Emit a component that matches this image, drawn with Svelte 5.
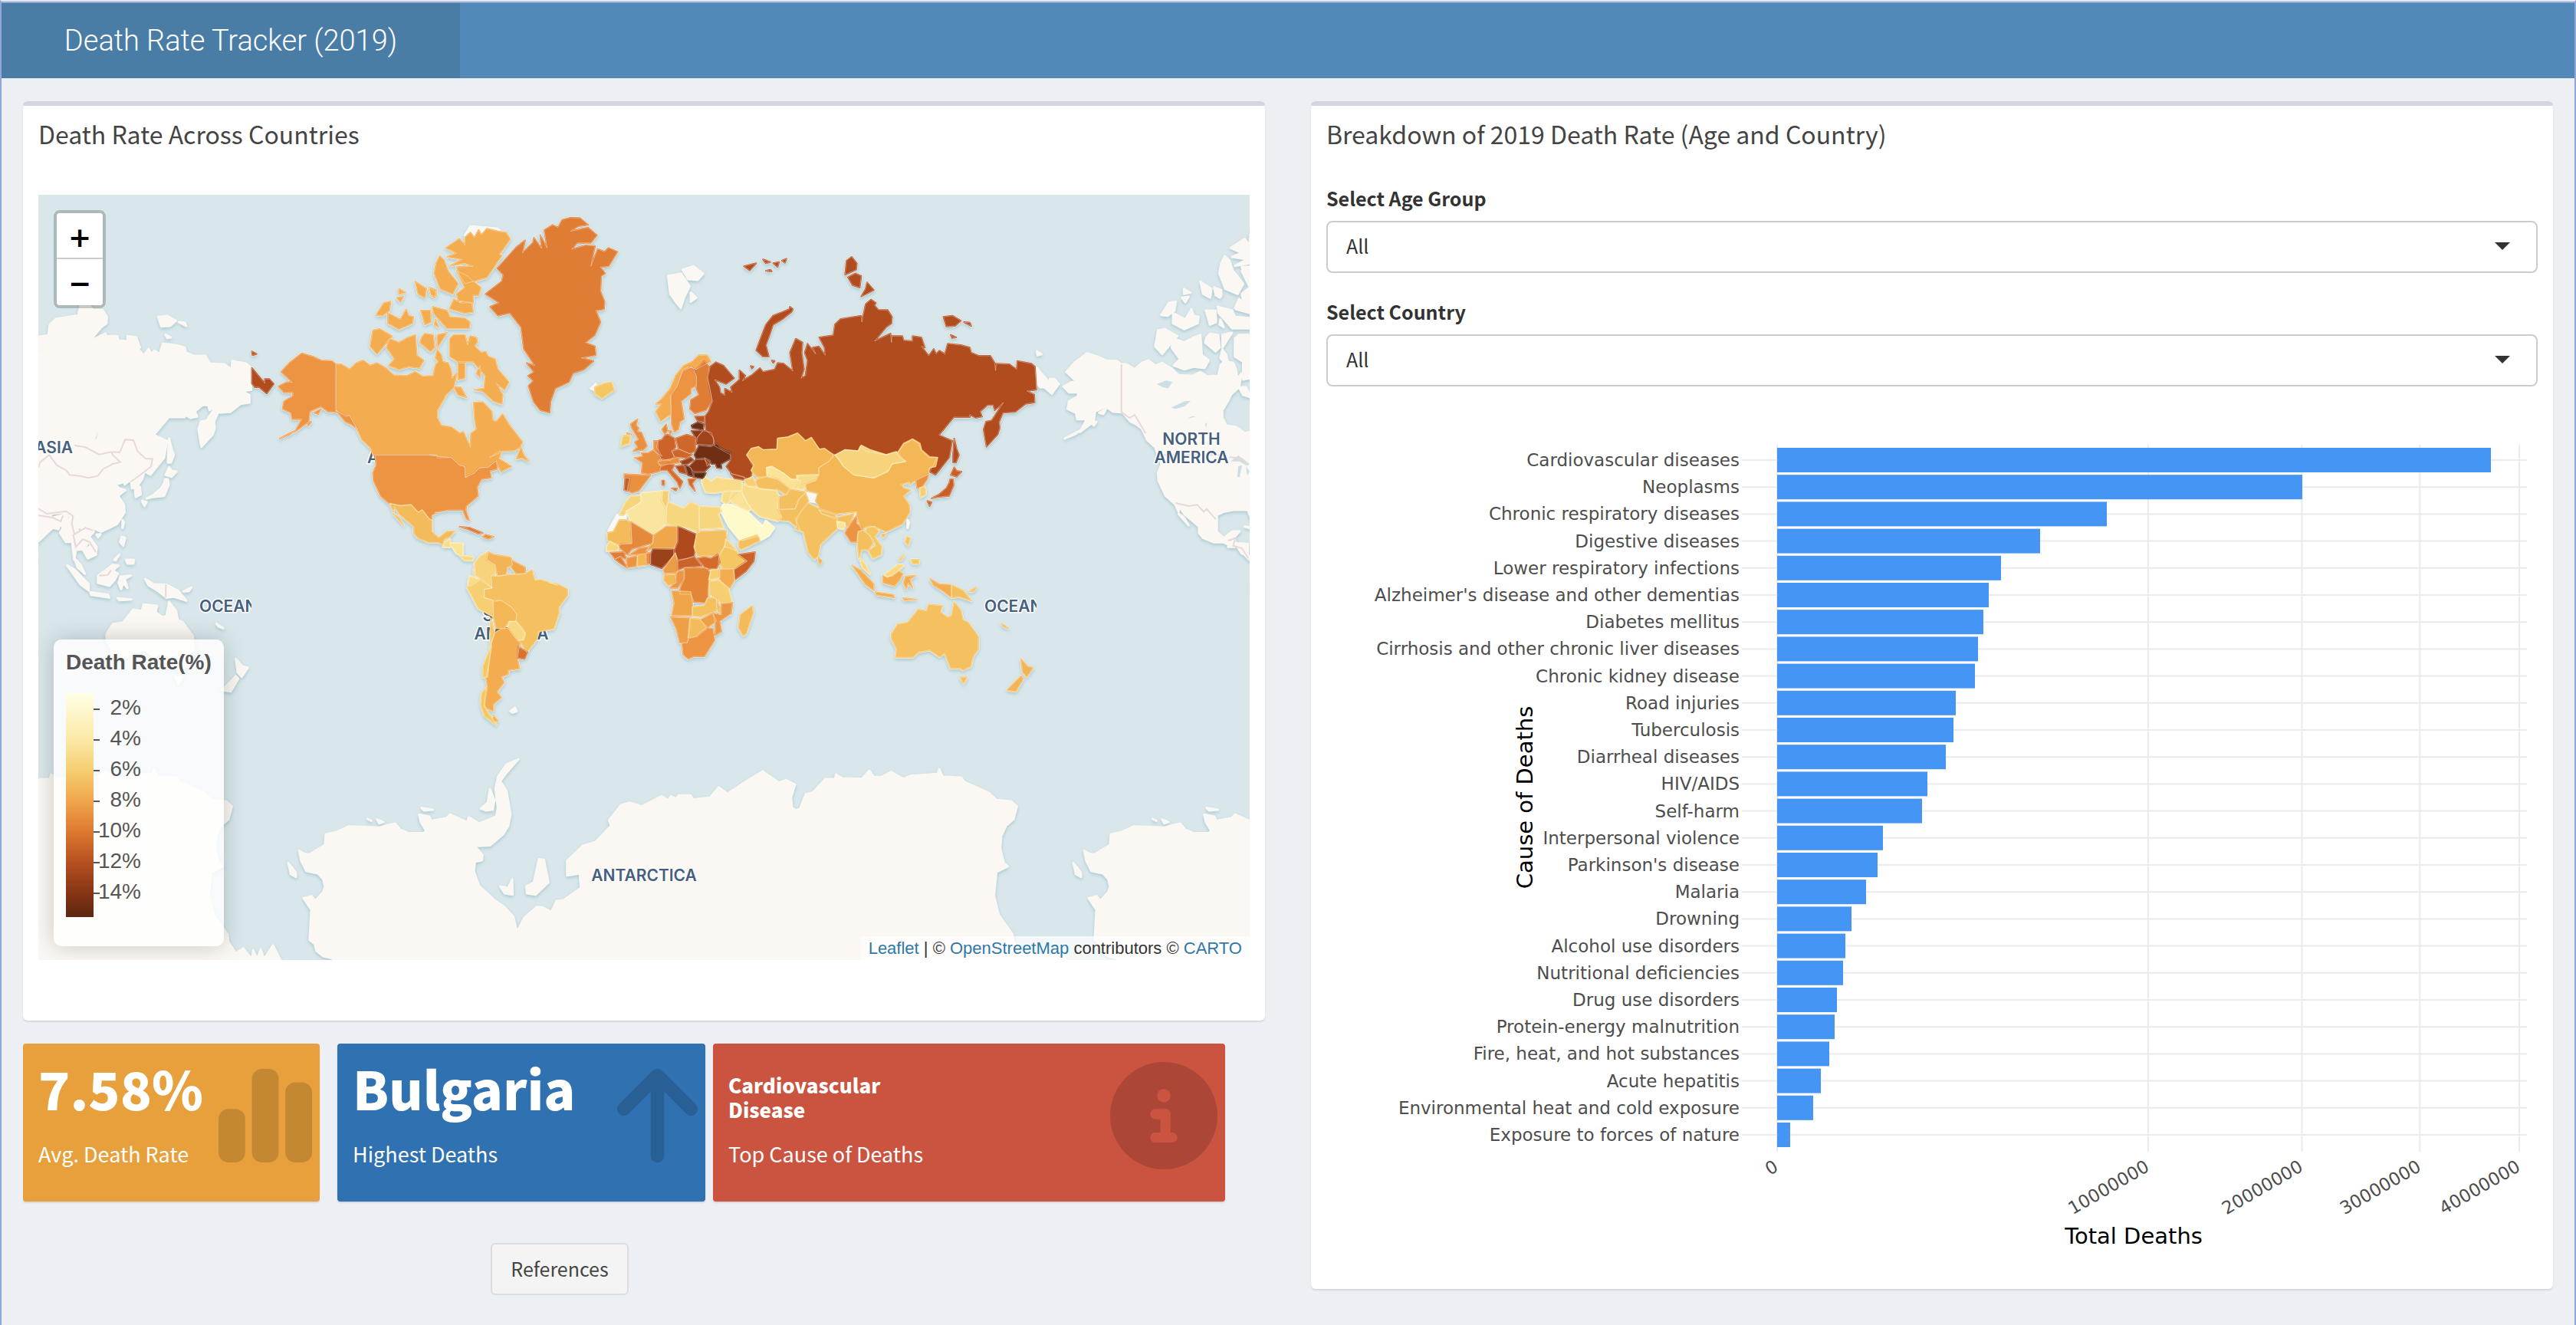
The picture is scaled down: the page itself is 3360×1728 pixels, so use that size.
<script>
  let age = $state('All');
  let country = $state('All');

  // Outlines are kept on separate sheets; each sheet has its origin on the map and its own scale.
  const sheets = {
    A: [40, 240, 2.8, 3],
    B: [560, 260, 2.8, 3],
    C: [800, 260, 2.61333, 3],
    D: [700, 600, 2.24, 3],
    E: [40, 740, 2.24, 2.8],
    F: [630, 900, 1.568, 3],
    G: [1300, 240, 3, 3]
  };

  // "/" starts a new ring, a letter switches the sheet, the rest are x y pairs.
  function outline(text, close = true) {
    let s = sheets.A;
    let x = null;
    let started = false;
    let d = '';
    for (const t of text.trim().split(/\s+/)) {
      if (t === '/') {
        if (close) d += 'Z';
        started = false;
      } else if (sheets[t]) {
        s = sheets[t];
      } else if (x === null) {
        x = +t;
      } else {
        d += (started ? 'L' : 'M') + (s[0] + x / s[2]).toFixed(1) + ' ' + (s[1] + +t / s[3]).toFixed(1);
        started = true;
        x = null;
      }
    }
    return close ? d + 'Z' : d;
  }

  const countries = [
    ['#f3ac4f', 'A 1115 705 1135 705 1165 725 1190 700 1215 690 1240 710 1265 700 1300 722 1325 748 1375 750 1405 735 1430 752 1470 750 1478 710 1490 695 1478 680 1485 648 1500 670 1505 695 1525 700 1535 725 1540 760 1556 740 B 90 735 60 765 A 1510 840 1485 885 1485 915 1500 945 1535 950 1568 975 B 125 910 150 970 152 915 172 900 165 855 162 795 195 793 228 830 232 865 245 870 268 840 290 880 340 950 330 970 310 983 255 985 220 1010 262 990 255 1015 300 1045 262 1065 250 1040 245 1022 215 1048 182 1050 165 1070 132 1088 130 1045 110 1040 80 1010 30 1005 0 1000 A 1485 1060 1250 1060 1240 1030 1210 1000 1195 965 1165 905 1150 910 1115 885'],
    ['#f3ac4f', 'B 75 545 90 530 130 530 140 570 148 535 172 540 175 558 165 575 190 600 205 595 215 615 240 625 250 665 290 715 275 745 245 720 268 765 265 800 235 790 195 750 165 745 200 740 205 690 160 635 105 635 75 615 / 105 640 130 640 130 700 105 705 / 172 680 185 650 185 695 / 90 735 115 735 135 775 105 765 / 335 970 345 1000 362 1025 340 1012 318 1015 / 60 190 110 155 130 180 130 150 150 130 165 150 180 120 190 140 210 115 250 125 280 130 295 155 270 195 255 215 265 220 210 305 165 320 130 330 110 295 100 265 160 262 130 250 75 260 120 235 65 225 100 210 / 100 280 140 300 160 320 188 345 180 375 160 375 160 405 105 395 100 370 130 345 / 75 425 90 390 110 405 155 405 160 440 130 445 80 430 / 38 222 55 240 68 280 105 330 85 370 40 350 18 290 25 250 / 12 420 65 435 75 460 130 465 148 480 145 505 65 505 45 480 15 445 / 0 345 25 355 20 385 5 375'],
    ['#f3ac4f', 'A 1405 382 1445 410 1440 445 1415 430 / 1455 405 1482 425 1480 440 1462 435 / 1345 410 1368 425 1345 430 / 1338 445 1362 440 1350 462 / 1290 465 1315 460 1310 495 1285 515 1262 512 / 1305 505 1350 530 1372 490 1380 515 1398 520 1395 545 1345 568 1305 545 / 1425 495 1460 495 1462 540 1440 550 / 1478 530 1490 560 1475 550 / 1250 572 1275 567 1320 595 1265 665 1240 635 / 1310 605 1345 620 1380 600 1405 590 1410 670 1435 690 1420 720 1380 715 1345 725 1308 710 1330 685 1300 640 / 1428 600 1440 585 1470 590 1475 640 1460 655 1422 620 / 1485 590 1520 582 1485 640'],
    ['#ed9442', 'A 945 700 990 662 1030 675 1060 690 1100 692 1115 705 1115 893 1085 890 1060 870 1020 890 1015 930 965 970 990 920 955 920 950 895 920 880 925 850 958 830 958 815 925 815 905 792 935 775 955 775 915 735 / 1115 885 1150 905 1165 905 1195 960 1170 940 1150 930 / 1010 935 1025 930 1015 945 / 1035 895 1060 880 1050 900 / 910 995 965 965 945 980'],
    ['#ed9442', 'A 1258 1060 1485 1060 B 30 1012 80 1010 110 1040 130 1045 132 1088 165 1070 182 1050 215 1048 245 1022 248 1055 222 1062 225 1090 190 1095 175 1125 178 1160 135 1200 133 1215 145 1255 135 1250 122 1215 70 1215 20 1225 A 1485 1285 1465 1295 1465 1315 1455 1310 1430 1275 1415 1285 1390 1255 1350 1260 1310 1250 1278 1220 1252 1160 1250 1130 1262 1100'],
    ['#f3bb5c', 'A 1312 1250 1350 1258 1390 1255 1415 1285 1430 1275 1455 1310 1465 1315 1465 1360 1490 1385 1520 1360 1548 1358 1530 1380 1510 1390 1505 1410 1490 1402 1455 1402 1415 1385 1400 1365 1400 1340 1345 1290 1328 1262 1325 1282 / 1325 1290 1345 1305 1362 1335'],
    ['#f9dc8a', 'B 55 1345 75 1330 75 1360 50 1360'],
    ['#fae396', 'B 75 1345 122 1348 122 1395 100 1385'],
    ['#f8d880', 'B 105 1385 120 1395 160 1400 158 1412 130 1412'],
    ['#d97735', 'B 110 1280 150 1285 195 1305 180 1308 140 1290'],
    ['#e8953f', 'B 195 1320 205 1312 235 1320 215 1328'],
    ['#df7d34', 'B 315 190 350 160 340 210 378 170 382 150 410 192 405 140 430 190 425 155 420 120 450 100 470 110 485 80 515 72 550 73 580 100 545 105 515 125 580 110 612 140 590 170 540 170 520 195 570 180 605 182 590 262 615 195 640 205 655 190 687 205 655 262 625 265 642 290 628 300 625 360 640 400 638 430 608 435 625 480 605 530 570 560 605 575 608 610 555 620 600 632 565 665 525 680 510 715 460 740 443 790 440 835 405 825 380 790 362 730 380 710 360 690 382 675 355 640 385 650 345 585 335 500 295 445 250 455 222 420 255 405 205 370 265 320 270 295 248 270 290 220'],
    ['#f4c763', 'B 605 735 640 720 665 715 675 745 630 778 605 760'],
    ['#f3ac4f', 'B 828 800 850 780 880 740 900 690 930 650 960 635 985 610 1015 610 1028 635 1000 650 975 665 950 655 925 665 905 730 890 755 880 770 882 840 845 868 828 830 848 800'],
    ['#ed9442', 'B 925 672 960 655 975 690 975 730 955 740 955 760 920 790 930 860 915 870 910 900 895 910 885 880 882 760 905 730'],
    ['#df7d34', 'B 950 655 975 665 1005 632 1022 655 1015 700 1025 740 1033 790 1010 825 970 838 952 820 955 785 985 765 975 740 975 690'],
    ['#e58a3b', 'B 850 900 865 880 870 905 860 918 / 875 905 885 908 880 918'],
    ['#e98f40', 'B 735 880 760 860 755 885 765 895 760 908 775 912 795 965 780 980 745 985 762 970 750 950 765 940 740 895 / 722 915 738 920 730 930'],
    ['#f4c763', 'B 708 925 735 922 730 955 700 965'],
    ['#ea9140', 'B 712 1075 808 1080 765 1140 740 1148 722 1138 732 1090 712 1090'],
    ['#c75f27', 'B 715 1088 733 1090 725 1140 712 1138'],
    ['#e98f40', 'B 760 1010 780 1005 775 992 800 992 820 980 845 1010 835 1030 845 1045 840 1065 800 1075 775 1070 778 1030 750 1010 / 820 945 835 945 830 970 850 1005 820 985'],
    ['#cc6429', 'B 835 945 850 940 860 925 870 920 895 935 900 970 885 985 895 1005 880 1022 845 1015 835 985'],
    ['#e98f40', 'B 835 1025 865 1020 910 1010 915 1030 885 1035 840 1040'],
    ['#d56c2c', 'B 840 1050 875 1032 895 1040 885 1060 925 1105 915 1130 905 1105 870 1060 845 1060 / 885 1130 905 1130 900 1140 / 850 1100 858 1100 858 1118 850 1115'],
    ['#cf672a', 'B 900 935 940 920 972 930 972 985 950 995 910 975'],
    ['#cf672a', 'B 885 985 910 978 960 998 940 1012 895 1008'],
    ['#9c421a', 'B 918 1025 955 1010 965 1020 945 1035 925 1038'],
    ['#8b3717', 'B 950 1045 975 1018 1005 1018 1025 1045 1005 1065 965 1065'],
    ['#a3451b', 'B 1005 1010 1025 1030 1015 1045'],
    ['#ad4a1d', 'B 900 1045 930 1040 940 1075 915 1068'],
    ['#6f2e14', 'B 935 1040 955 1050 965 1085 945 1080'],
    ['#5c2611', 'B 965 1070 1010 1070 1000 1092 970 1088'],
    ['#d16929', 'B 945 1095 975 1092 960 1110 970 1140 950 1115'],
    ['#bb5521', 'B 970 850 1005 848 1005 872 980 868'],
    ['#6a2c13', 'B 957 885 980 872 1002 880 1000 902 960 895'],
    ['#8b3717', 'B 957 905 998 905 975 935'],
    ['#9f431b', 'B 980 930 1000 905 1030 912 1040 945 1035 962 975 958'],
    ['#b14c1f', 'C 330 655 350 637 375 650 412 700 385 722 345 705 362 735 365 757 380 767 380 740 405 755 400 735 430 705 430 668 450 690 440 710 475 685 500 660 510 675 550 665 560 640 580 642 612 672 602 600 622 545 645 560 642 600 650 665 640 700 655 690 662 630 652 600 662 565 690 605 680 580 700 575 722 610 720 580 702 540 750 532 755 490 775 468 845 455 847 480 860 410 878 392 895 405 890 415 903 432 935 433 950 460 948 485 930 500 890 555 945 525 948 560 950 535 985 535 990 552 1020 555 1020 535 1050 540 1062 580 1050 575 1075 612 1092 585 1100 605 1112 592 1130 605 1140 565 1185 570 1215 580 1220 600 1245 612 1285 612 1300 640 1303 670 1305 643 1350 645 1375 665 1377 632 1425 643 1437 655 1442 745 1410 750 1435 765 1436 795 1405 800 1370 832 1328 835 1315 870 1317 895 1310 920 1272 968 1262 900 1270 870 1290 865 1330 795 1300 825 1295 805 1275 805 1250 830 1257 850 1235 855 1215 842 1215 852 1160 852 1110 922 1155 945 1145 1010 1098 1077 1078 1065 1105 1010 1075 1010 1048 980 1040 955 1018 940 990 960 970 992 960 988 930 1000 860 985 840 965 835 985 790 980 757 1000 735 990 720 975 702 978 675 932 655 945 628 915 595 930 560 935 558 978 510 980 495 968 470 975 455 1000 475 1045 468 1095 405 1075 385 1045 400 1020 400 1000 345 965 340 930 315 900 312 850 325 830 338 790 328 740 322 690 328 670'],
    ['#b14c1f', 'C 487 590 505 535 520 490 545 455 600 430 602 420 612 430 608 440 575 470 545 490 530 540 520 570 530 615 510 615 / 795 240 812 225 830 250 828 275 790 295 / 800 305 825 290 845 300 840 345 815 335 / 865 325 888 355 845 380 860 350 / 445 262 487 250 465 278 / 510 235 535 245 520 250 / 545 250 565 245 560 265 / 575 240 590 232 585 248 / 520 280 535 275 540 282 / 1125 460 1155 455 1185 475 1165 495 1135 497 / 1195 480 1215 482 1220 495 / 1150 530 1168 540 1155 542 / 1162 935 1170 975 1178 1000 1168 1030 1158 1030 1158 1000 / 540 630 550 632 545 640 / 468 652 478 655 472 662 / A 808 720 855 780 855 763 872 763 888 782 862 820 835 795 820 795 808 780 / 808 655 825 665 810 670'],
    ['#702e13', 'B 968 1000 985 963 1030 968 1050 955 1065 975 1100 990 1100 1015 1065 1035 1068 1052 1050 1050 1045 1035 1030 1035 1025 1020 1005 1012 975 1015'],
    ['#f9dc8a', 'B 995 1100 1010 1088 1030 1105 1050 1088 1085 1095 1140 1098 1140 1140 1090 1140 1040 1148 1010 1145 1000 1120'],
    ['#b04c1e', 'B 1100 1072 1150 1085 1150 1098 1115 1092'],
    ['#f6cf73', 'B 1150 1100 1180 1085 1195 1120 1165 1125'],
    ['#f4b756', 'C 455 1000 470 975 495 968 510 980 558 978 560 935 595 930 628 915 655 945 675 932 702 978 720 975 750 1000 735 1025 700 1050 700 1078 640 1078 612 1098 580 1070 535 1048 522 1085 490 1085 470 1060 480 1040'],
    ['#fae396', 'C 522 1050 540 1045 580 1072 605 1095 640 1100 625 1135 600 1130 560 1095 525 1085'],
    ['#f4bf5f', 'C 490 1095 520 1085 560 1095 600 1132 590 1155 560 1135 500 1135 485 1110'],
    ['#f9dc8a', 'C 625 1080 700 1078 690 1100 655 1115 650 1135 612 1130 630 1105'],
    ['#f9dc8a', 'C 440 1115 460 1122 490 1130 555 1140 565 1165 558 1200 575 1245 560 1258 500 1240 470 1210 455 1185 440 1150'],
    ['#fae396', 'C 405 1145 435 1142 455 1185 470 1210 460 1218 410 1190 395 1175'],
    ['#f9dc8a', 'C 375 1145 435 1140 410 1170 385 1190 370 1180'],
    ['#fdf9c9', 'C 365 1215 375 1195 400 1195 460 1225 490 1260 515 1285 505 1315 440 1335 430 1330 395 1280'],
    ['#fdf9c9', 'C 490 1275 510 1280 520 1258 548 1285 530 1315 500 1335 505 1315'],
    ['#f4bf5f', 'C 428 1338 490 1315 500 1335 435 1370 428 1360'],
    ['#f4bf5f', 'C 565 1165 590 1155 605 1135 655 1145 630 1175 620 1210 565 1212'],
    ['#f4bf5f', 'C 562 1215 620 1212 635 1172 655 1150 665 1180 640 1220 620 1250 638 1295 600 1258 562 1255 575 1245'],
    ['#f4c060', 'C 625 1255 640 1220 665 1190 700 1210 710 1230 760 1245 765 1285 705 1350 698 1395 685 1408 665 1380 648 1300 622 1290'],
    ['#f4c060', 'C 765 1245 820 1230 800 1285 790 1270 765 1262'],
    ['#fae396', 'C 762 1260 790 1265 785 1290 765 1285'],
    ['#f4c060', 'C 700 1215 760 1235 755 1250 710 1230'],
    ['#f3ac4f', 'C 700 1402 710 1415 702 1430'],
    ['#f4b756', 'C 655 1115 690 1100 700 1080 700 1050 735 1025 755 1000 770 1015 785 1045 820 1078 885 1090 940 1060 950 1035 995 1025 970 990 990 955 1020 938 1045 955 1050 980 1078 1008 1105 1010 1098 1045 1075 1050 1075 1075 1030 1098 1010 1115 1010 1105 980 1115 990 1130 1012 1138 988 1160 1008 1195 1010 1225 985 1270 930 1300 890 1280 865 1280 845 1290 830 1240 830 1222 760 1230 705 1210 690 1180 698 1150 660 1140 / 915 1312 928 1310 920 1322'],
    ['#f7d47c', 'C 757 1000 790 980 835 985 845 963 875 980 930 1000 965 988 975 1010 997 1025 950 1035 935 1065 888 1090 820 1078 785 1045'],
    ['#ea9140', 'C 1032 1100 1075 1075 1070 1095 1050 1128 1035 1130'],
    ['#f6cf73', 'C 1045 1128 1062 1125 1065 1155 1048 1165'],
    ['#c75f27', 'C 1162 1048 1170 1062 1187 1065 1170 1085 1150 1078 / 1148 1095 1158 1095 1160 1118 1145 1160 1105 1165 1085 1170 1110 1155 1135 1130 1145 1110 / 1070 1180 1085 1185 1078 1200'],
    ['#ed9442', 'C 790 1305 800 1285 828 1240 830 1270 850 1290 832 1310 830 1340 810 1340'],
    ['#f4bf5f', 'C 835 1300 850 1295 875 1315 885 1345 870 1370 845 1370 838 1410 832 1350'],
    ['#f4c763', 'C 865 1285 890 1280 905 1300 890 1320 915 1360 912 1390 885 1405 870 1375 895 1355 885 1330 860 1300'],
    ['#f8d880', 'C 840 1405 860 1430 875 1465 850 1440'],
    ['#f4c763', 'C 1000 1320 1012 1325 1005 1355 995 1340 / 1015 1410 1042 1410 1040 1425 1020 1425 / 975 1410 992 1390 980 1412'],
    ['#f3ac4f', 'D 922 412 945 430 985 485 985 510 960 485 / 990 517 1042 527 1045 538 992 527 / 1012 452 1040 455 1055 432 1070 445 1060 470 1045 492 1012 480 / 1078 455 1108 452 1090 465 1098 500 1085 480 1080 505 1072 480 / 1150 465 1175 485 1212 488 1212 538 1185 510 1160 490 / 1070 540 1110 545 1075 548'],
    ['#f8d880', 'D 1015 450 1055 410 1072 412 1050 440 1025 458'],
    ['#f4bf5f', 'D 1212 488 1245 510 1270 550 1235 535 1212 538 / 1262 514 1285 498 1278 512'],
    ['#f4c060', 'D 1037 680 1055 642 1085 635 1115 585 1140 590 1145 565 1185 570 1180 595 1200 615 1212 610 1220 555 1240 590 1245 625 1260 635 1290 690 1290 740 1275 770 1268 808 1245 822 1238 815 1210 815 1192 755 1178 770 1148 743 1115 752 1098 772 1048 772 1052 740 1037 700 / 1238 850 1257 850 1247 875'],
    ['#f3b457', 'D 1415 778 1435 808 1450 812 1432 848 1420 830 / 1415 845 1422 855 1400 905 1375 900 / 1358 640 1378 658 1365 652'],
    ['#f7d47c', 'D 242 215 258 170 275 142 303 140 305 165 275 190 262 200 255 215'],
    ['#fae59e', 'D 262 200 305 165 305 130 368 122 366 160 380 190 378 248 340 290 275 240'],
    ['#f6cf73', 'D 368 122 385 122 383 160 378 190 366 160'],
    ['#f7d680', 'D 378 190 385 165 430 190 450 165 475 180 475 285 440 265 405 258 378 248'],
    ['#f7d680', 'D 475 182 532 185 540 200 530 210 545 265 475 270'],
    ['#f4bb5a', 'D 208 285 225 280 242 235 262 235 275 245 278 325 240 330 215 320 207 310'],
    ['#e58a3b', 'D 275 242 340 295 338 325 300 340 278 348 265 370 240 340 245 328 278 328'],
    ['#f0a64b', 'D 342 295 378 260 410 260 410 320 400 345 340 345 318 355 340 325'],
    ['#ae4a1d', 'D 413 260 465 290 463 330 460 375 440 385 413 390 403 355 413 320'],
    ['#f4bf5f', 'D 470 280 553 275 555 310 545 350 525 375 470 375 460 340'],
    ['#f7cf73', 'D 552 310 585 355 550 340'],
    ['#f4c763', 'D 535 375 548 338 575 345 590 370 615 395 580 425 545 425 530 400'],
    ['#cb6228', 'D 590 370 638 360 635 395 612 435 577 470 577 430 615 395'],
    ['#f8d880', 'D 205 340 215 318 240 340 235 355 205 355'],
    ['#df7d34', 'D 215 362 255 360 262 390 245 375 230 388'],
    ['#df7d34', 'D 228 388 245 378 265 422 245 405'],
    ['#ed9442', 'D 262 385 295 375 295 415 265 420'],
    ['#f4b756', 'D 295 372 318 368 320 410 292 415'],
    ['#ed9442', 'D 270 372 300 345 328 340 320 365'],
    ['#e98f40', 'D 320 365 333 362 333 405 320 408'],
    ['#9c421a', 'D 340 348 400 350 400 375 365 423 333 408 333 370'],
    ['#ed9c46', 'D 370 430 405 365 412 400 412 440 375 443'],
    ['#cb6228', 'D 412 395 460 378 482 415 430 420 412 430'],
    ['#d46b2c', 'D 470 385 490 380 510 385 530 368 535 400 525 425 495 425'],
    ['#f4b756', 'D 373 450 405 448 408 480 385 490 372 470'],
    ['#eb9745', 'D 410 435 430 432 430 465 412 500 390 500 405 480'],
    ['#e38638', 'D 432 422 498 422 507 445 500 500 500 535 492 558 460 555 450 525 418 525 420 500 432 465'],
    ['#f6cf73', 'D 510 430 535 428 535 460 503 468'],
    ['#f3ac4f', 'D 535 428 575 425 578 470 565 500 535 475'],
    ['#f6cf73', 'D 505 475 535 470 560 505 570 555 540 560 505 525'],
    ['#f1a54b', 'D 395 512 450 515 455 555 455 608 395 608 402 560'],
    ['#f4c060', 'D 455 575 490 570 500 540 525 540 525 590 480 612 455 610'],
    ['#f4b756', 'D 525 545 535 575 535 605 527 575'],
    ['#eb9745', 'D 540 562 572 558 568 600 535 630 540 670 522 685 522 640 515 600 540 605'],
    ['#ef9f48', 'D 478 625 515 600 525 630 500 655'],
    ['#ef9f48', 'D 392 615 448 618 448 655 440 715 418 715 408 660'],
    ['#f4bb5a', 'D 448 620 475 622 495 655 465 690 443 695 445 655'],
    ['#ed9442', 'D 425 715 440 715 445 698 470 690 500 658 515 660 520 705 490 768 460 768 443 778 428 760'],
    ['#f4bb5a', 'D 595 605 630 570 632 600 612 680 603 687 590 655'],
    ['#f7d47c', 'B 165 1425 188 1395 215 1378 210 1410 240 1430 242 1475 E 1362 25 1345 30 1348 75 1320 45 1295 25 1295 5 B 168 1465'],
    ['#f3b457', 'B 215 1380 235 1390 298 1400 305 1430 285 1440 280 1470 250 1475 240 1430 208 1410'],
    ['#f0a64b', 'B 300 1412 350 1440 350 1465 318 1465 300 1440'],
    ['#f4c060', 'B 232 1475 280 1470 315 1468 350 1465 375 1450 385 1490 E 1490 45 1540 65 D 35 480 60 485 90 505 90 530 65 575 65 600 50 660 10 670 E 1483 235 1480 260 1450 310 1440 290 1430 270 1445 250 1440 225 1418 195 1420 170 1405 145 1375 120 1350 120 1325 110 1325 80 1348 75 1345 30'],
    ['#fadd8c', 'E 1283 32 1312 45 1285 70 1278 60'],
    ['#f6cf73', 'E 1275 72 1312 45 1348 75 1325 80 1325 110 1350 120 1352 180 1308 150'],
    ['#f4b756', 'E 1352 125 1375 120 1405 145 1420 170 1420 195 1395 200 1385 222 1360 222 1352 180'],
    ['#f8d880', 'E 1398 197 1418 198 1445 240 1440 265 1422 265 1395 222'],
    ['#f3ac4f', 'E 1375 225 1395 222 1422 268 1430 275 1422 330 1428 370 1395 375 1395 390 1375 400 1383 420 1362 455 1375 475 1352 500 1352 525 1325 510 1335 440 1330 400 1348 290 1345 280 1355 240 / 1352 540 1365 562 1352 560'],
    ['#f4c763', 'E 1345 185 1355 240 1345 280 1335 400 1322 400 1322 360 1345 290 1343 230 / 1330 440 1325 500 1335 530 1355 565 1360 575 1325 540 1315 500 1318 460'],
    ['#d9722f', 'E 1425 290 1452 310 1443 335 1422 330']
  ].map(([fill, text]) => ({ fill, d: outline(text) }));

  // Land without a death rate: Svalbard, Kashmir, Taiwan, Western Sahara, the Falklands, Antarctica.
  const bareLand = outline(
    'B 872 300 920 290 950 340 930 385 918 425 900 400 880 370 / 925 275 965 262 1000 290 980 315 945 312 / 955 365 975 385 955 400 / C 645 1145 698 1160 690 1185 665 1180 / 1003 1255 1008 1265 1003 1285 / 800 1230 828 1220 830 1240 / D 210 275 235 215 260 215 260 235 240 237 225 277 / E 1402 525 1415 512 1420 525 1408 530 / B 205 110 250 115 290 150 200 160 130 140 150 105 / 590 740 608 722 612 750 / ' +
      'E 645 1445 650 1398 662 1428 672 1395 682 1430 708 1380 735 1445 / 1325 870 1335 860 1342 810 1355 850 1350 885 1330 888 1315 880 / 1142 878 1175 885 1150 888 / 753 1080 775 1115 775 1130 760 1120 / 1448 1165 1470 1150 1485 1065 1500 1068 1513 1150 1475 1195 1450 1190 / 1372 1165 1395 1170 1407 1140 1408 1195 1385 1190 / 985 918 995 925 / 1012 920 1030 930 1018 935 / ' +
      'E 883 1455 883 1428 855 1420 835 1400 830 1375 815 1360 820 1250 797 1208 820 1200 832 1217 855 1185 860 1165 855 1140 840 1118 805 1108 790 1070 785 1035 800 1045 815 1048 860 1013 862 975 895 965 930 945 1020 950 1045 940 1065 935 1080 958 1105 970 1150 970 1155 960 1140 930 1135 903 1165 910 1170 925 1215 915 1225 902 1275 930 1280 912 1310 935 1360 910 1365 880 1358 810 1365 765 1390 720 1425 700 1390 750 1372 780 1390 815 1402 900 1395 945 1380 975 1342 1015 1298 1018 1320 1050 1318 1070 1298 1075 1295 1110 1310 1162 1355 1215 1385 1240 1410 1275 1421 1330 F 85 890 110 848 122 850 140 868 150 825 165 822 200 775 198 718 172 725 172 668 205 608 230 595 262 530 258 510 282 450 300 440 325 455 365 415 378 430 385 415 395 425 400 412 425 412 430 428 465 420 482 380 500 405 540 355 572 318 585 335 605 362 620 352 638 370 630 420 632 460 640 470 648 465 660 408 675 400 700 348 720 347 722 330 735 345 775 347 790 315 800 340 815 340 835 320 860 347 875 335 930 328 933 310 940 338 978 342 985 360 1015 385 1035 402 1050 430 1080 435 1092 455 1085 505 1070 530 1060 570 1058 620 1065 675 1073 690 1050 712 1045 805 1055 880 1083 955 1085 985 1100 1030 1115 1010 1132 1050 1132 1090'
  );

  const borders = outline(
    'A 28 1110 35 1088 68 1060 95 1100 130 1120 142 1138 180 1142 210 1150 245 1142 265 1115 300 1095 328 1088 300 1060 295 1048 250 1058 200 1030 160 1022 / 300 1048 325 1050 345 1000 375 1002 390 1045 420 1075 445 1075 440 1105 405 1135 365 1165 / 28 1270 60 1290 130 1280 155 1300 150 1330 160 1370 200 1345 228 1355 / 28 1297 80 1305 110 1320 118 1298 / 155 1370 165 1420 190 1390 215 1400 238 1440 / E 395 62 395 110 / 200 30 225 28 235 10 / ' +
      'G 488 705 488 892 520 915 540 903 565 945 583 975 / 700 1248 750 1260 785 1255 810 1282 822 1272 858 1312 / 910 1068 960 1075 985 1100 / 630 1060 880 1060 / 905 1395 935 1385 925 1415 960 1425 985 1465',
    false
  );

  const lakes = outline(
    'G 627 783 665 768 688 775 670 800 650 795 / 682 875 710 862 735 850 760 848 735 870 700 880 / 745 918 765 908 780 910 / 815 940 823 932 820 955 / 915 1085 945 1062 990 1095 975 1100 950 1085 / 945 1105 960 1100 950 1148 942 1145 / 975 1105 990 1125 980 1140 / A 247 967 240 995 205 1027 235 1000'
  );

  const legendTicks = [2, 4, 6, 8, 10, 12, 14];

  const causes = [
    ['Cardiovascular diseases', 931],
    ['Neoplasms', 685],
    ['Chronic respiratory diseases', 430],
    ['Digestive diseases', 343],
    ['Lower respiratory infections', 292],
    ["Alzheimer's disease and other dementias", 276],
    ['Diabetes mellitus', 269],
    ['Cirrhosis and other chronic liver diseases', 262],
    ['Chronic kidney disease', 258],
    ['Road injuries', 233],
    ['Tuberculosis', 230],
    ['Diarrheal diseases', 220],
    ['HIV/AIDS', 196],
    ['Self-harm', 189],
    ['Interpersonal violence', 138],
    ["Parkinson's disease", 131],
    ['Malaria', 116],
    ['Drowning', 97],
    ['Alcohol use disorders', 89],
    ['Nutritional deficiencies', 86],
    ['Drug use disorders', 78],
    ['Protein-energy malnutrition', 75],
    ['Fire, heat, and hot substances', 68],
    ['Acute hepatitis', 57],
    ['Environmental heat and cold exposure', 47],
    ['Exposure to forces of nature', 17]
  ];
  const barLeft = 588;
  const rowY = (i) => 60 + (i * 880) / 25;
  // The value axis has a square-root scale.
  const deathTicks = [0, 10000000, 20000000, 30000000, 40000000].map((value) => ({
    value,
    x: barLeft + 484 * Math.sqrt(value / 10000000)
  }));
</script>

<div class="app">
  <header class="topbar">
    <a class="brand" href="#top">Death Rate Tracker (2019)</a>
  </header>

  <main class="content">
    <div class="column">
      <section class="box">
        <h3 class="box-title">Death Rate Across Countries</h3>
        <div class="map">
          <svg class="world" viewBox="50 254 1580 998" role="img" aria-label="World map of death rates">
            <defs>
              <filter id="coast" x="-5%" y="-5%" width="110%" height="110%">
                <feDropShadow dx="0" dy="2" stdDeviation="2" flood-color="#86b4bd" flood-opacity="0.6" />
              </filter>
              <g id="land">
                <path d={bareLand} />
                {#each countries as c}
                  <path d={c.d} />
                {/each}
              </g>
              <clipPath id="tile-west"><rect x="50" y="254" width="278" height="998" /></clipPath>
              <clipPath id="tile-main"><rect x="328" y="254" width="1024" height="998" /></clipPath>
            </defs>
            <g class="land" filter="url(#coast)">
              <use href="#land" />
              <use href="#land" x="-1024" />
              <use href="#land" x="1024" />
            </g>
            <path class="lakes" d={lakes} />
            <path class="borders" d={borders} />
            <g class="place" clip-path="url(#tile-west)">
              <text x="95" y="591" text-anchor="end">ASIA</text>
              <text x="260" y="798">OCEANIA</text>
            </g>
            <g class="place" clip-path="url(#tile-main)">
              <text x="479" y="604">AMERICA</text>
              <text x="1284" y="798">OCEANIA</text>
              <text x="667" y="810" text-anchor="middle">SOUTH</text>
              <text x="667" y="834" text-anchor="middle">AMERICA</text>
              <text x="840" y="1149" text-anchor="middle">ANTARCTICA</text>
            </g>
            <g class="place">
              <text x="1554" y="580" text-anchor="middle">NORTH</text>
              <text x="1554" y="604" text-anchor="middle">AMERICA</text>
            </g>
            <g class="rates">
              {#each countries as c}
                <path d={c.d} fill={c.fill} stroke={c.fill} />
              {/each}
            </g>
            <g class="rate-edges">
              {#each countries as c}
                <path d={c.d} />
              {/each}
            </g>
          </svg>

          <div class="zoom">
            <button type="button" aria-label="Zoom in">+</button>
            <button type="button" aria-label="Zoom out">−</button>
          </div>

          <div class="legend">
            <strong>Death Rate(%)</strong>
            <svg width="110" height="300" viewBox="0 0 110 300">
              <defs>
                <linearGradient id="ramp" x1="0" y1="0" x2="0" y2="1">
                  <stop offset="0" stop-color="#ffffe5" />
                  <stop offset="0.21" stop-color="#fbe9a6" />
                  <stop offset="0.35" stop-color="#f5cd6f" />
                  <stop offset="0.48" stop-color="#f0a64b" />
                  <stop offset="0.62" stop-color="#dd7830" />
                  <stop offset="0.76" stop-color="#b54f1f" />
                  <stop offset="0.89" stop-color="#863515" />
                  <stop offset="1" stop-color="#5c2611" />
                </linearGradient>
              </defs>
              <rect x="0" y="0" width="36" height="292" fill="url(#ramp)" />
              {#each legendTicks as t, i}
                <line x1="36" x2="44" y1={21 + i * 40} y2={21 + i * 40} />
                <text x="98" y={28 + i * 40} text-anchor="end">{t}%</text>
              {/each}
            </svg>
          </div>

          <div class="attribution">
            <a href="#leaflet">Leaflet</a> | © <a href="#osm">OpenStreetMap</a> contributors © <a href="#carto">CARTO</a>
          </div>
        </div>
      </section>

      <div class="stats">
        <article class="stat average">
          <div>
            <h3>7.58%</h3>
            <p>Avg. Death Rate</p>
          </div>
          <svg viewBox="0 0 448 512" width="122" height="140" aria-hidden="true">
            <rect x="0" y="224" width="128" height="256" rx="48" />
            <rect x="160" y="32" width="128" height="448" rx="48" />
            <rect x="320" y="96" width="128" height="384" rx="48" />
          </svg>
        </article>
        <article class="stat highest">
          <div>
            <h3>Bulgaria</h3>
            <p>Highest Deaths</p>
          </div>
          <svg viewBox="0 0 384 512" width="105" height="140" aria-hidden="true">
            <path d="M214.6 41.4c-12.5-12.5-32.8-12.5-45.3 0l-160 160c-12.5 12.5-12.5 32.8 0 45.3s32.8 12.5 45.3 0L160 141.2V448c0 17.7 14.3 32 32 32s32-14.3 32-32V141.2L329.4 246.6c12.5 12.5 32.8 12.5 45.3 0s12.5-32.8 0-45.3l-160-160z" />
          </svg>
        </article>
        <article class="stat cause">
          <div>
            <h3>Cardiovascular<br />Disease</h3>
            <p>Top Cause of Deaths</p>
          </div>
          <svg viewBox="0 0 512 512" width="140" height="140" aria-hidden="true">
            <path d="M256 512A256 256 0 1 0 256 0a256 256 0 1 0 0 512zM216 336h24V272H216c-13.3 0-24-10.7-24-24s10.7-24 24-24h48c13.3 0 24 10.7 24 24v88h8c13.3 0 24 10.7 24 24s-10.7 24-24 24H216c-13.3 0-24-10.7-24-24s10.7-24 24-24zm40-208a32 32 0 1 1 0 64 32 32 0 1 1 0-64z" />
          </svg>
        </article>
      </div>

      <div class="actions">
        <button type="button" class="references">References</button>
      </div>
    </div>

    <div class="column">
      <section class="box chart-box">
        <h3 class="box-title">Breakdown of 2019 Death Rate (Age and Country)</h3>

        <div class="field">
          <label for="age">Select Age Group</label>
          <div class="picker">
            <select id="age" bind:value={age}>
              <option>All</option>
            </select>
          </div>
        </div>
        <div class="field">
          <label for="country">Select Country</label>
          <div class="picker">
            <select id="country" bind:value={country}>
              <option>All</option>
            </select>
          </div>
        </div>

        <svg class="chart" viewBox="0 0 1580 1120" role="img" aria-label="Total deaths by cause">
          <g class="grid">
            {#each causes as _, i}
              <line x1="542" x2="1566" y1={rowY(i)} y2={rowY(i)} />
            {/each}
            {#each deathTicks as t}
              <line x1={t.x} x2={t.x} y1="40" y2="962" />
            {/each}
          </g>
          {#each causes as [name, width], i}
            <rect class="bar" x={barLeft} y={rowY(i) - 16} {width} height="32" />
            <text class="tick" x="539" y={rowY(i) + 8} text-anchor="end">{name}</text>
          {/each}
          {#each deathTicks as t}
            <text class="tick" text-anchor="end" transform="translate({t.x + 3} 986) rotate(-30)">{t.value}</text>
          {/each}
          <text class="axis" text-anchor="middle" transform="translate(269 500) rotate(-90)">Cause of Deaths</text>
          <text class="axis" x="1053" y="1082" text-anchor="middle">Total Deaths</text>
        </svg>
      </section>
    </div>
  </main>
</div>

<style>
  :global(body) {
    margin: 0;
    background: #ecf0f5;
  }

  .app {
    box-sizing: border-box;
    min-height: 100vh;
    border: 2px solid #8fa8d8;
    border-top-color: #e4e7ec;
    border-bottom: 0;
    background: #ecf0f5;
    color: #333;
    font-family: 'Noto Sans CJK JP', 'Noto Sans', sans-serif;
  }

  h3,
  p {
    margin: 0;
  }

  .topbar {
    display: flex;
    height: 98px;
    border-top: 2px solid #8fa8d8;
    background: #5289b8;
  }

  .brand {
    box-sizing: border-box;
    width: 598px;
    background: #4a7da6;
    color: #fff;
    font: 300 38px/98px Roboto, 'Liberation Sans', sans-serif;
    text-align: center;
    text-decoration: none;
  }

  .content {
    display: grid;
    grid-template-columns: 1fr 1fr;
    gap: 60px;
    padding: 30px 28px;
  }

  .box {
    border-top: 6px solid #d2d6de;
    border-radius: 6px;
    background: #fff;
    box-shadow: 0 2px 2px rgba(0, 0, 0, 0.1);
    padding: 16px 20px 79px;
  }

  .chart-box {
    padding-bottom: 21px;
  }

  .box-title {
    color: #444;
    font-size: 32px;
    font-weight: 400;
    line-height: 40px;
  }

  .map {
    position: relative;
    margin-top: 60px;
    background: #d9e7eb;
    overflow: hidden;
  }

  .world {
    display: block;
    width: 100%;
  }

  .land {
    fill: #fbf8f3;
    stroke: #fbf8f3;
    stroke-width: 3;
    stroke-linejoin: round;
  }

  .lakes {
    fill: #cbdfe4;
  }

  .borders {
    fill: none;
    stroke: #e8d8da;
    stroke-width: 2;
  }

  .rates {
    stroke-width: 2;
    stroke-linejoin: round;
  }

  .rate-edges {
    fill: none;
    stroke: #fff;
    stroke-opacity: 0.35;
    stroke-width: 1;
  }

  .place {
    fill: #475f7e;
    stroke: #fff;
    stroke-width: 3;
    stroke-linejoin: round;
    paint-order: stroke;
    font: 600 21px Inter, 'Liberation Sans', sans-serif;
  }

  .zoom {
    position: absolute;
    top: 20px;
    left: 20px;
    display: grid;
    border: 4px solid rgba(0, 0, 0, 0.2);
    border-radius: 8px;
    background-clip: padding-box;
  }

  .zoom button {
    box-sizing: border-box;
    width: 60px;
    height: 60px;
    border: 0;
    border-radius: 0 0 4px 4px;
    background: #fff;
    color: #000;
    font: 700 36px/48px 'DejaVu Sans', sans-serif;
    padding: 4px 0 0;
  }

  .zoom button:first-child {
    border-bottom: 2px solid #ccc;
    border-radius: 4px 4px 0 0;
    padding-top: 6px;
  }

  .legend {
    position: absolute;
    bottom: 18px;
    left: 20px;
    box-sizing: border-box;
    width: 222px;
    border-radius: 10px;
    background: rgba(255, 255, 255, 0.8);
    box-shadow: 0 0 30px rgba(0, 0, 0, 0.2);
    color: #555;
    font: 28px/32px 'Liberation Sans', sans-serif;
    padding: 14px 16px 30px;
  }

  .legend strong {
    display: block;
    margin-bottom: 24px;
  }

  .legend svg {
    display: block;
    fill: #555;
    stroke-width: 2;
  }

  .legend line {
    stroke: #555;
  }

  .attribution {
    position: absolute;
    right: 0;
    bottom: 0;
    background: rgba(255, 255, 255, 0.7);
    color: #333;
    font: 22px/31px 'Liberation Sans', sans-serif;
    padding: 0 10px;
  }

  .attribution a {
    color: #2f78a8;
    text-decoration: none;
  }

  .stats {
    display: grid;
    grid-template-columns: minmax(0, 410fr) minmax(0, 490fr) minmax(0, 668fr);
    margin-top: 30px;
    padding-right: 52px;
  }

  .stat {
    display: flex;
    justify-content: space-between;
    box-sizing: border-box;
    height: 206px;
    border-radius: 4px;
    box-shadow: 0 2px 2px rgba(0, 0, 0, 0.1);
    color: #fff;
    padding: 24px 10px 0 20px;
  }

  .stat div {
    white-space: nowrap;
  }

  .stat h3 {
    height: 94px;
    font-size: 68px;
    font-weight: 900;
    line-height: 68px;
  }

  .stat p {
    font-size: 27px;
    line-height: 52px;
  }

  .stat svg {
    flex: none;
    fill: rgba(0, 0, 0, 0.15);
  }

  .average {
    margin-right: 23px;
    background: #e7a03c;
  }

  .highest {
    margin-right: 10px;
    background: #3071b1;
  }

  .cause {
    background: #cb5441;
  }

  .stat.cause h3 {
    box-sizing: border-box;
    padding-top: 14px;
    font-size: 26px;
    line-height: 32px;
  }

  .actions {
    width: 1400px;
    max-width: 100%;
    margin-top: 54px;
    text-align: center;
  }

  .references {
    height: 68px;
    border: 2px solid #ddd;
    border-radius: 6px;
    background: #f4f4f4;
    color: #444;
    font: 25px/36px 'Noto Sans CJK JP', 'Noto Sans', sans-serif;
    padding: 0 24px 2px;
  }

  .field {
    margin-top: 30px;
  }

  .box-title + .field {
    margin-top: 44px;
  }

  .field label {
    display: block;
    margin-bottom: 10px;
    font-size: 25px;
    font-weight: 700;
    line-height: 40px;
  }

  .picker {
    position: relative;
  }

  .picker::after {
    content: '';
    position: absolute;
    top: 28px;
    right: 36px;
    border: 10px solid transparent;
    border-top-color: #333;
    border-bottom: 0;
    pointer-events: none;
  }

  .picker select {
    display: block;
    box-sizing: border-box;
    width: 100%;
    height: 68px;
    appearance: none;
    border: 2px solid #ccc;
    border-radius: 8px;
    background: #fff;
    color: #333;
    font: 25px 'Noto Sans CJK JP', 'Noto Sans', sans-serif;
    padding: 0 24px 4px;
  }

  .chart {
    display: block;
    width: 100%;
    margin-top: 36px;
  }

  .grid {
    stroke: #ebebeb;
    stroke-width: 2;
  }

  .bar {
    fill: #4495f4;
  }

  .chart text {
    font-family: 'DejaVu Sans', sans-serif;
  }

  .tick {
    fill: #4d4d4d;
    font-size: 23px;
  }

  .axis {
    fill: #000;
    font-size: 29px;
  }
</style>
